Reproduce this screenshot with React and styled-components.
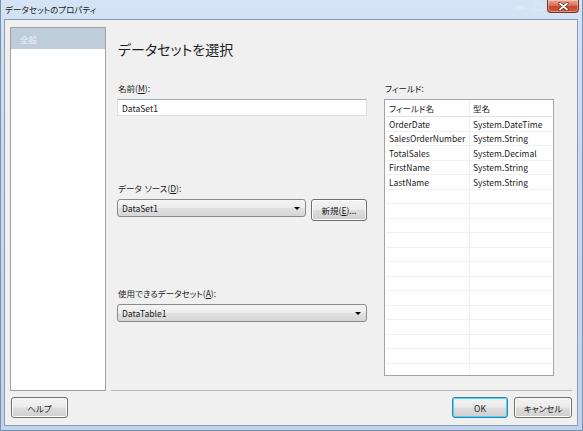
import React from "react";
import styled, { createGlobalStyle } from "styled-components";

const Global = createGlobalStyle`
  html, body { margin: 0; padding: 0; }
  body {
    width: 583px;
    height: 431px;
    overflow: hidden;
    font-family: "Noto Sans CJK JP", "Noto Sans", sans-serif;
    font-feature-settings: "palt";
    font-size: 8.5px;
    color: #1a1a1a;
  }
  * { box-sizing: border-box; }
`;

const Window = styled.div`
  width: 583px;
  height: 431px;
  display: flex;
  flex-direction: column;
  background: linear-gradient(180deg, #d4e4f6 0%, #c6d9ef 40%, #bfd3eb 100%);
  border-left: 1px solid #7891b0;
  border-right: 1px solid #7891b0;
  border-bottom: 1px solid #7891b0;
`;

const TitleBar = styled.div`
  height: 19px;
  flex: none;
  display: flex;
  align-items: flex-start;
  position: relative;
`;

const Title = styled.div`
  padding: 3px 0 0 4px;
  font-size: 8.5px;
  line-height: 12px;
  color: #1a1a1a;
`;

const Caption = styled.div`
  position: absolute;
  top: 0;
  right: 3px;
  display: flex;
  align-items: flex-start;
`;

const Ghost = styled.div`
  width: 18px;
  height: 13px;
  display: flex;
  align-items: center;
  justify-content: center;
  opacity: 0.18;
`;

const CloseBtn = styled.div`
  width: 32px;
  height: 13px;
  border: 1px solid #7b3024;
  border-top: none;
  border-radius: 0 0 4px 4px;
  background: linear-gradient(180deg, #e9a593 0%, #d9725c 45%, #c74630 55%, #d15a3c 100%);
  display: flex;
  align-items: center;
  justify-content: center;
  box-shadow: inset 0 0 0 1px rgba(255, 255, 255, 0.35);
`;

const Client = styled.div`
  flex: 1;
  margin: 0 4px 4px 3px;
  border: 1px solid #8c9db3;
  background: #f0f0f0;
  display: flex;
  flex-direction: column;
`;

const Body = styled.div`
  display: flex;
  padding: 7px 5px 0 5px;
  height: 371px;
  flex: none;
`;

const Sidebar = styled.div`
  width: 96px;
  flex: none;
  background: #fff;
  border: 1px solid #a0a0a0;
  display: flex;
  flex-direction: column;
`;

const NavItem = styled.div`
  height: 21px;
  display: flex;
  align-items: center;
  padding-left: 9px;
  background: ${(p) => (p.$active ? "#bfcddb" : "transparent")};
  color: ${(p) => (p.$active ? "#eef2f6" : "#000")};
  font-size: 8.5px;
`;

const Main = styled.div`
  flex: 1;
  margin-left: 5px;
  border-bottom: 1px solid #b6b6b6;
  padding: 13px 18px 0 6px;
  display: flex;
  flex-direction: column;
`;

const Heading = styled.div`
  font-size: 14px;
  line-height: 18px;
  color: #1e1e1e;
  padding-left: 1px;
`;

const Columns = styled.div`
  margin-top: 24px;
  display: flex;
  gap: 17px;
`;

const LeftCol = styled.div`
  width: 250px;
  display: flex;
  flex-direction: column;
`;

const RightCol = styled.div`
  width: 170px;
  display: flex;
  flex-direction: column;
`;

const Group = styled.div`
  margin-top: ${(p) => p.$top || 0}px;
  display: flex;
  flex-direction: column;
`;

const Label = styled.div`
  font-size: 8.5px;
  line-height: 12px;
  height: 12px;
  margin-bottom: 5px;
  padding-left: 1px;
  white-space: nowrap;
  u { text-underline-offset: 1px; }
`;

const WordGap = styled.span`
  display: inline-block;
  width: 3px;
`;

const TextBox = styled.div`
  height: 17px;
  width: 100%;
  background: #fff;
  border: 1px solid #dbdfe6;
  border-top-color: #abadb3;
  display: flex;
  align-items: center;
  padding-left: 4px;
`;

const ControlRow = styled.div`
  display: flex;
  align-items: flex-start;
  gap: 5px;
`;

const Combo = styled.div`
  height: 18px;
  width: ${(p) => p.$w}px;
  border: 1px solid #8a8a8a;
  border-radius: 3px;
  background: linear-gradient(180deg, #f4f4f4 0%, #ececec 48%, #e0e0e0 52%, #d6d6d6 100%);
  display: flex;
  align-items: center;
  justify-content: space-between;
  padding: 0 4px 0 4px;
`;

const Arrow = styled.span`
  width: 0;
  height: 0;
  border-left: 3px solid transparent;
  border-right: 3px solid transparent;
  border-top: 3px solid #000;
  margin-right: 1px;
`;

const Button = styled.div`
  width: ${(p) => p.$w}px;
  height: ${(p) => p.$h || 21}px;
  flex: none;
  border: 1px solid ${(p) => (p.$primary ? "#3c7fb1" : "#707070")};
  border-radius: 3px;
  background: linear-gradient(180deg, #f3f3f3 0%, #ebebeb 48%, #dddddd 52%, #cfcfcf 100%);
  box-shadow: inset 0 0 0 1px ${(p) => (p.$primary ? "#48d8fb" : "#fcfcfc")};
  display: flex;
  align-items: center;
  justify-content: center;
  white-space: nowrap;
`;

const Grid = styled.div`
  height: 277px;
  border: 1px solid #a3a3ab;
  background: #fff;
  padding: 0 1px;
  overflow: hidden;
  display: flex;
  flex-direction: column;
`;

const GridRow = styled.div`
  display: flex;
  flex: none;
  height: ${(p) => (p.$head ? 17 : 14.5)}px;
  border-bottom: 1px solid ${(p) => (p.$head ? "#e2e2e2" : "#f0f0f0")};
`;

const Cell = styled.div`
  width: ${(p) => (p.$first ? "84px" : "auto")};
  flex: ${(p) => (p.$first ? "none" : "1")};
  border-right: ${(p) => (p.$first ? "1px solid #f0f0f0" : "none")};
  display: flex;
  align-items: center;
  padding-left: 3px;
  white-space: nowrap;
  overflow: hidden;
`;

const Footer = styled.div`
  flex: 1;
  display: flex;
  align-items: flex-start;
  padding: 6px 5px 0 6px;
  gap: 6px;
`;

const Spacer = styled.div`
  flex: 1;
`;

const fields = [
  ["OrderDate", "System.DateTime"],
  ["SalesOrderNumber", "System.String"],
  ["TotalSales", "System.Decimal"],
  ["FirstName", "System.String"],
  ["LastName", "System.String"],
];

export default function App() {
  const empty = Array.from({ length: 14 });
  return (
    <>
      <Global />
      <Window>
        <TitleBar>
          <Title>データセットのプロパティ</Title>
          <Caption>
            <Ghost>
              <svg width="9" height="4" viewBox="0 0 9 4">
                <rect x="0" y="1" width="9" height="3" fill="#fff" />
              </svg>
            </Ghost>
            <Ghost>
              <svg width="9" height="8" viewBox="0 0 9 8">
                <rect x="0.5" y="0.5" width="8" height="7" fill="none" stroke="#fff" />
              </svg>
            </Ghost>
            <CloseBtn>
              <svg width="11" height="9" viewBox="0 0 11 9">
                <path d="M2 1.5 L9 7.5 M9 1.5 L2 7.5" stroke="#6b2a20" strokeWidth="3.2" strokeLinecap="round" />
                <path d="M2 1.5 L9 7.5 M9 1.5 L2 7.5" stroke="#ffffff" strokeWidth="1.8" strokeLinecap="round" />
              </svg>
            </CloseBtn>
          </Caption>
        </TitleBar>
        <Client>
          <Body>
            <Sidebar>
              <NavItem $active>全般</NavItem>
            </Sidebar>
            <Main>
              <Heading>データセットを選択</Heading>
              <Columns>
                <LeftCol>
                  <Group>
                    <Label>
                      名前(<u>M</u>):
                    </Label>
                    <TextBox>DataSet1</TextBox>
                  </Group>
                  <Group $top={66}>
                    <Label>
                      データ<WordGap />ソース(<u>D</u>):
                    </Label>
                    <ControlRow>
                      <Combo $w={189}>
                        <span>DataSet1</span>
                        <Arrow />
                      </Combo>
                      <Button $w={56} $h={22}>
                        新規(<u>E</u>)...
                      </Button>
                    </ControlRow>
                  </Group>
                  <Group $top={66}>
                    <Label>
                      使用できるデータセット(<u>A</u>):
                    </Label>
                    <Combo $w={250}>
                      <span>DataTable1</span>
                      <Arrow />
                    </Combo>
                  </Group>
                </LeftCol>
                <RightCol>
                  <Label>フィールド:</Label>
                  <Grid>
                    <GridRow $head>
                      <Cell $first>フィールド名</Cell>
                      <Cell>型名</Cell>
                    </GridRow>
                    {fields.map(([n, t]) => (
                      <GridRow key={n}>
                        <Cell $first>{n}</Cell>
                        <Cell>{t}</Cell>
                      </GridRow>
                    ))}
                    {empty.map((_, i) => (
                      <GridRow key={"e" + i}>
                        <Cell $first />
                        <Cell />
                      </GridRow>
                    ))}
                  </Grid>
                </RightCol>
              </Columns>
            </Main>
          </Body>
          <Footer>
            <Button $w={57}>ヘルプ</Button>
            <Spacer />
            <Button $w={56} $primary>
              OK
            </Button>
            <Button $w={58}>キャンセル</Button>
          </Footer>
        </Client>
      </Window>
    </>
  );
}
